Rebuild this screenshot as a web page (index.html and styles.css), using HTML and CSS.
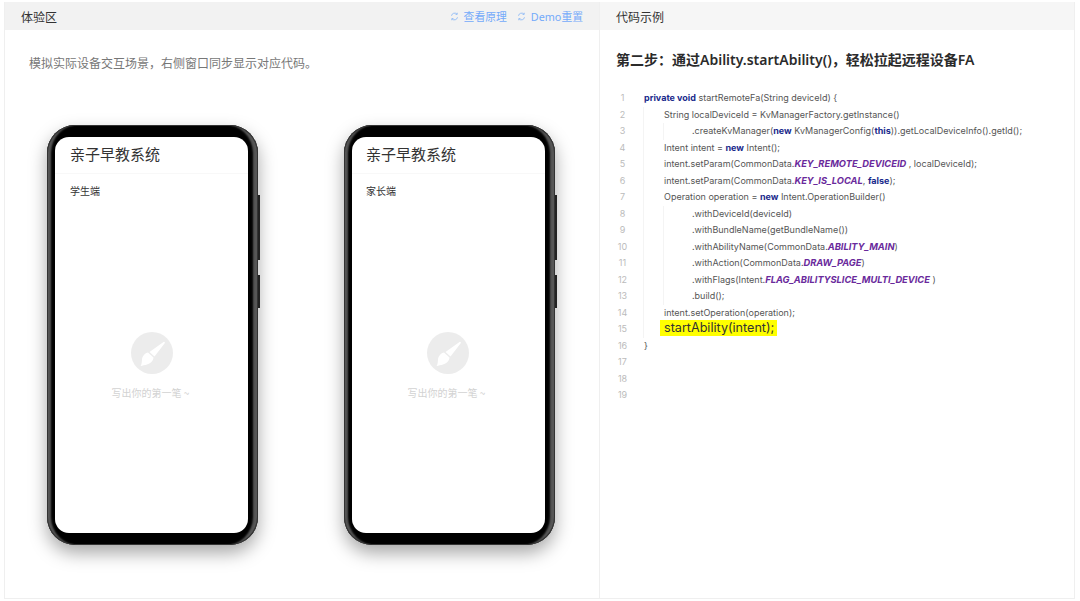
FILE: index.html
```html
<!DOCTYPE html>
<html lang="en">
<head>
  <meta charset="UTF-8">
  <title>Demo</title>
  <link rel="stylesheet" href="styles.css">
</head>
<body>
  <main class="page">

    <!-- Left panel -->
    <section class="panel panel-left">
      <header class="panel-head">
        <span class="panel-title">体验区</span>
        <div class="head-links">
          <a class="head-link"><svg class="refresh" viewBox="0 0 12 12"><path d="M2 5a4.2 4.2 0 0 1 7.2-2.2M10 7a4.2 4.2 0 0 1-7.2 2.2"/><path d="M9.6 1v2.2H7.4M2.4 11V8.8h2.2"/></svg>查看原理</a>
          <a class="head-link"><svg class="refresh" viewBox="0 0 12 12"><path d="M2 5a4.2 4.2 0 0 1 7.2-2.2M10 7a4.2 4.2 0 0 1-7.2 2.2"/><path d="M9.6 1v2.2H7.4M2.4 11V8.8h2.2"/></svg>Demo重置</a>
        </div>
      </header>
      <p class="intro">模拟实际设备交互场景，右侧窗口同步显示对应代码。</p>

      <div class="phones">
        <div class="phone">
          <div class="screen">
            <div class="app-title">亲子早教系统</div>
            <div class="app-role">学生端</div>
            <div class="empty">
              <div class="empty-icon">
                <svg viewBox="0 0 42 42"><path class="brush" d="M32.500 10c.9-.7 1.800.3 1.200 1.200L23.500 24.500l-5-4.500z"/><path class="brush" d="M17 20.500l5.500 5c-.3 3.500-3 6-6.500 7-2 .5-4.500 1.200-6.500 1.500 1.200-1.500 1.300-4 1.500-6.500.3-3.500 3-6.500 6-7z"/></svg>
              </div>
              <div class="empty-text">写出你的第一笔 ~</div>
            </div>
          </div>
        </div>
        <div class="phone">
          <div class="screen">
            <div class="app-title">亲子早教系统</div>
            <div class="app-role">家长端</div>
            <div class="empty">
              <div class="empty-icon">
                <svg viewBox="0 0 42 42"><path class="brush" d="M32.500 10c.9-.7 1.800.3 1.200 1.200L23.500 24.500l-5-4.500z"/><path class="brush" d="M17 20.500l5.500 5c-.3 3.500-3 6-6.500 7-2 .5-4.500 1.200-6.500 1.500 1.200-1.500 1.300-4 1.500-6.500.3-3.500 3-6.500 6-7z"/></svg>
              </div>
              <div class="empty-text">写出你的第一笔 ~</div>
            </div>
          </div>
        </div>
      </div>
    </section>

    <!-- Right panel -->
    <section class="panel panel-right">
      <header class="panel-head">
        <span class="panel-title">代码示例</span>
      </header>
      <h2 class="step-title">第二步：通过Ability.startAbility()，轻松拉起远程设备FA</h2>

      <div class="code">
        <div class="line"><span class="num">1</span><span class="src"><b>private void</b> startRemoteFa(String deviceId) {</span></div>
        <div class="line"><span class="num">2</span><span class="src guide"><span class="in1">String localDeviceId = KvManagerFactory.getInstance()</span></span></div>
        <div class="line"><span class="num">3</span><span class="src guide"><span class="in1 guide"><span class="in2">.createKvManager(<b>new</b> KvManagerConfig(<b>this</b>)).getLocalDeviceInfo().getId();</span></span></span></div>
        <div class="line"><span class="num">4</span><span class="src guide"><span class="in1">Intent intent = <b>new</b> Intent();</span></span></div>
        <div class="line"><span class="num">5</span><span class="src guide"><span class="in1">intent.setParam(CommonData.<i>KEY_REMOTE_DEVICEID</i> , localDeviceId);</span></span></div>
        <div class="line"><span class="num">6</span><span class="src guide"><span class="in1">intent.setParam(CommonData.<i>KEY_IS_LOCAL</i>, <b>false</b>);</span></span></div>
        <div class="line"><span class="num">7</span><span class="src guide"><span class="in1">Operation operation = <b>new</b> Intent.OperationBuilder()</span></span></div>
        <div class="line"><span class="num">8</span><span class="src guide"><span class="in1 guide"><span class="in2">.withDeviceId(deviceId)</span></span></span></div>
        <div class="line"><span class="num">9</span><span class="src guide"><span class="in1 guide"><span class="in2">.withBundleName(getBundleName())</span></span></span></div>
        <div class="line"><span class="num">10</span><span class="src guide"><span class="in1 guide"><span class="in2">.withAbilityName(CommonData.<i>ABILITY_MAIN</i>)</span></span></span></div>
        <div class="line"><span class="num">11</span><span class="src guide"><span class="in1 guide"><span class="in2">.withAction(CommonData.<i>DRAW_PAGE</i>)</span></span></span></div>
        <div class="line"><span class="num">12</span><span class="src guide"><span class="in1 guide"><span class="in2">.withFlags(Intent.<i>FLAG_ABILITYSLICE_MULTI_DEVICE</i> )</span></span></span></div>
        <div class="line"><span class="num">13</span><span class="src guide"><span class="in1 guide"><span class="in2">.build();</span></span></span></div>
        <div class="line"><span class="num">14</span><span class="src guide"><span class="in1">intent.setOperation(operation);</span></span></div>
        <div class="line"><span class="num">15</span><span class="src guide"><span class="in1"><mark class="hl">startAbility(intent);</mark></span></span></div>
        <div class="line"><span class="num">16</span><span class="src">}</span></div>
        <div class="line"><span class="num">17</span></div>
        <div class="line"><span class="num">18</span></div>
        <div class="line"><span class="num">19</span></div>
      </div>
    </section>

  </main>
</body>
</html>
```

FILE: styles.css
```css
html, body {
  margin: 0;
  padding: 0;
  background-color: #fff;
}

body {
  font-family: "Noto Sans", "Noto Sans CJK SC", sans-serif;
  width: 1080px;
  height: 601px;
  overflow: hidden;
}

.page {
  display: flex;
  box-sizing: border-box;
  width: 1071px;
  height: 597px;
  margin: 2px 0 0 4px;
  border: 1px solid #efefef;
  border-top: none;
}

.panel {
  box-sizing: border-box;
  height: 100%;
}

.panel-left {
  width: 595px;
  border-right: 1px solid #efefef;
}

.panel-right {
  flex: 1;
}

.panel-head {
  display: flex;
  justify-content: space-between;
  align-items: center;
  height: 28px;
  background-color: #f2f2f2;
  box-sizing: border-box;
}

.panel-left .panel-head {
  padding: 0 16px;
}

.panel-right .panel-head {
  padding: 0 16px;
  background-color: #f6f6f6;
}

.panel-title {
  font-family: "Noto Sans CJK SC", sans-serif;
  font-size: 12px;
  color: #333;
}

.head-links {
  display: flex;
  gap: 10px;
}

.head-link {
  display: flex;
  align-items: center;
  gap: 5px;
  font-size: 10.800px;
  color: #74aafa;
}

.refresh {
  width: 9px;
  height: 9px;
  fill: none;
  stroke: #8fbaf5;
  stroke-width: 1.200;
}

.intro {
  margin: 24px 0 0 24px;
  font-family: "Noto Sans CJK SC", sans-serif;
  font-size: 12px;
  line-height: 18px;
  color: #777;
}

.phones {
  display: flex;
  gap: 86px;
  margin: 53px 0 0 42px;
}

/* phone body, side keys come from the pseudo elements */
.phone {
  position: relative;
  box-sizing: border-box;
  width: 211px;
  height: 420px;
  padding: 12px 10px 12px 8px;
  background-color: #000;
  border-radius: 28px;
  box-shadow: inset 0 0 0 1px #333, inset 5px 0 2px -1px #565656, inset -6px 0 2px -1px #565656, 0 8px 18px rgba(0, 0, 0, 0.35);
}

.phone::before,
.phone::after {
  content: "";
  position: absolute;
  right: -2px;
  width: 2px;
  background-color: #222;
}

.phone::before {
  top: 70px;
  height: 65px;
}

.phone::after {
  top: 150px;
  height: 33px;
}

.screen {
  display: flex;
  flex-direction: column;
  height: 100%;
  background-color: #fff;
  border-radius: 14px;
  overflow: hidden;
}

.app-title {
  height: 36px;
  padding-left: 15px;
  font-family: "Noto Sans CJK SC", sans-serif;
  font-size: 15px;
  line-height: 34px;
  color: #333;
  border-bottom: 1px solid #f8f8f8;
}

.phone:nth-child(2) .app-title,
.phone:nth-child(2) .app-role {
  padding-left: 14px;
}

.app-role {
  padding: 9px 0 0 15px;
  font-family: "Noto Sans CJK SC", sans-serif;
  font-size: 10px;
  line-height: 15px;
  color: #333;
}

.empty {
  display: flex;
  flex-direction: column;
  align-items: center;
  margin-top: 134px;
}

.phone:nth-child(2) .empty {
  padding-right: 2px;
}

.empty-icon {
  width: 42px;
  height: 42px;
  background-color: #ececec;
  border-radius: 50%;
}

.empty-icon svg {
  display: block;
  width: 42px;
  height: 42px;
}

.brush {
  fill: #fff;
}

.empty-text {
  margin: 11px 2px 0 0;
  font-family: "Noto Sans CJK SC", sans-serif;
  font-size: 10px;
  line-height: 15px;
  color: #d2d2d2;
}

.step-title {
  margin: 20px 0 0 16px;
  font-family: "Noto Sans", "Noto Sans CJK SC", sans-serif;
  font-size: 14px;
  font-weight: 600;
  line-height: 20px;
  color: #2b2b2b;
}

.code {
  margin-top: 20px;
  font-family: Inter, "Noto Sans", sans-serif;
  font-size: 9px;
  color: #555;
}

.line {
  display: flex;
  height: 16.500px;
  line-height: 16.500px;
  white-space: pre;
}

.num {
  flex: none;
  width: 27px;
  margin-left: 9px;
  margin-right: 8px;
  text-align: center;
  color: #bbb;
}

.src {
  flex: 1;
  display: block;
}

.guide {
  border-left: 1px solid #f4f4f4;
  margin-left: -1px;
}

.in1 {
  display: block;
  margin-left: 20px;
}

.in1.guide {
  margin-left: 19px;
  padding-left: 0;
}

.in2 {
  display: block;
  margin-left: 28px;
}

.code b {
  font-weight: 700;
  color: #1a2a8c;
}

.code i {
  font-size: 9.300px;
  font-weight: 700;
  font-style: italic;
  color: #6a2a9c;
}

.hl {
  display: inline-block;
  margin: -1px 0 0 -4px;
  padding: 0 3px 0 4px;
  height: 16px;
  font-size: 12.600px;
  line-height: 16px;
  color: #333;
  background-color: #ffff00;
}
```
